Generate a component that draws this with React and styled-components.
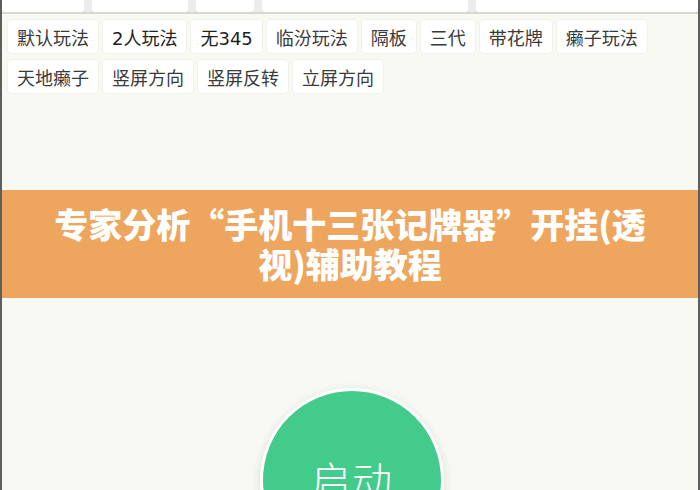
import React from "react";
import styled, { createGlobalStyle } from "styled-components";

const GlobalStyle = createGlobalStyle`
  html, body {
    margin: 0;
    padding: 0;
    background: #f9f9f4;
  }
  body {
    font-family: "Noto Sans CJK SC", "Noto Sans", sans-serif;
  }
`;

const Frame = styled.div`
  width: 700px;
  height: 490px;
  box-sizing: border-box;
  border-left: 2px solid #5e5e5e;
  border-right: 2px solid #5e5e5e;
  background: #f9f9f4;
  overflow: hidden;
  display: flex;
  flex-direction: column;
  & > * {
    flex-shrink: 0;
  }
`;

/* bottom of the previous tag row, cut off at the top */
const TopStrip = styled.div`
  height: 12px;
  display: flex;
  gap: 8px;
  background: #ececea;
  border-bottom: 2px solid #d6d6d2;
`;

const StripBox = styled.div`
  width: ${(p) => p.w}px;
  flex-shrink: 0;
  background: #fff;
  border-radius: 0 0 4px 4px;
  flex-grow: ${(p) => (p.grow ? 1 : 0)};
`;

const TagArea = styled.div`
  display: flex;
  flex-wrap: wrap;
  gap: 7px 5px;
  padding: 6px 6px 0;
  width: 660px;
`;

const Tag = styled.div`
  height: 33px;
  padding: 0 9px;
  display: flex;
  align-items: center;
  background: #fff;
  border-radius: 4px;
  box-shadow: 0 0 0 1px #f1f1ec;
  font-family: "DejaVu Sans", "Noto Sans CJK SC", sans-serif;
  font-size: 18px;
  color: ${(p) => (p.dark ? "#222" : "#3a3a3a")};
`;

const Banner = styled.div`
  margin-top: 97px;
  height: 108px;
  box-sizing: border-box;
  background: #eea55d;
  display: flex;
  align-items: center;
  justify-content: center;
  padding: 0 40px;
  margin-left: -2px;
  margin-right: -2px;
`;

const Title = styled.h1`
  margin: 0;
  color: #fff;
  font-size: 34px;
  line-height: 40px;
  font-weight: 900;
  text-align: center;
  max-width: 612px;
`;

const StartArea = styled.div`
  display: flex;
  justify-content: center;
  margin-top: 90px;
`;

const StartButton = styled.div`
  width: 184px;
  height: 184px;
  box-sizing: border-box;
  border-radius: 50%;
  border: 3px solid #fff;
  background: #43cb8b;
  box-shadow: 0 2px 10px rgba(0, 0, 0, 0.12);
  display: flex;
  justify-content: center;
  align-items: flex-start;
  padding-top: 68px;
  margin-left: 4px;
  color: #fff;
  font-size: 40px;
  line-height: 40px;
  font-weight: 300;
  letter-spacing: 1px;
`;

const topBoxes = [82, 96, 58, 206];
const row1 = ["默认玩法", "2人玩法", "无345", "临汾玩法", "隔板", "三代", "带花牌", "癞子玩法"];
const row2 = ["天地癞子", "竖屏方向", "竖屏反转", "立屏方向"];

export default function App() {
  return (
    <>
      <GlobalStyle />
      <Frame>
        <TopStrip>
          {topBoxes.map((w, i) => (
            <StripBox key={i} w={w} />
          ))}
          <StripBox w={0} grow />
        </TopStrip>
        <TagArea>
          {[...row1, ...row2].map((t) => (
            <Tag key={t} dark={t === "2人玩法" || t === "无345"}>
              {t}
            </Tag>
          ))}
        </TagArea>
        <Banner>
          <Title>专家分析“手机十三张记牌器”开挂(透视)辅助教程</Title>
        </Banner>
        <StartArea>
          <StartButton>启动</StartButton>
        </StartArea>
      </Frame>
    </>
  );
}
